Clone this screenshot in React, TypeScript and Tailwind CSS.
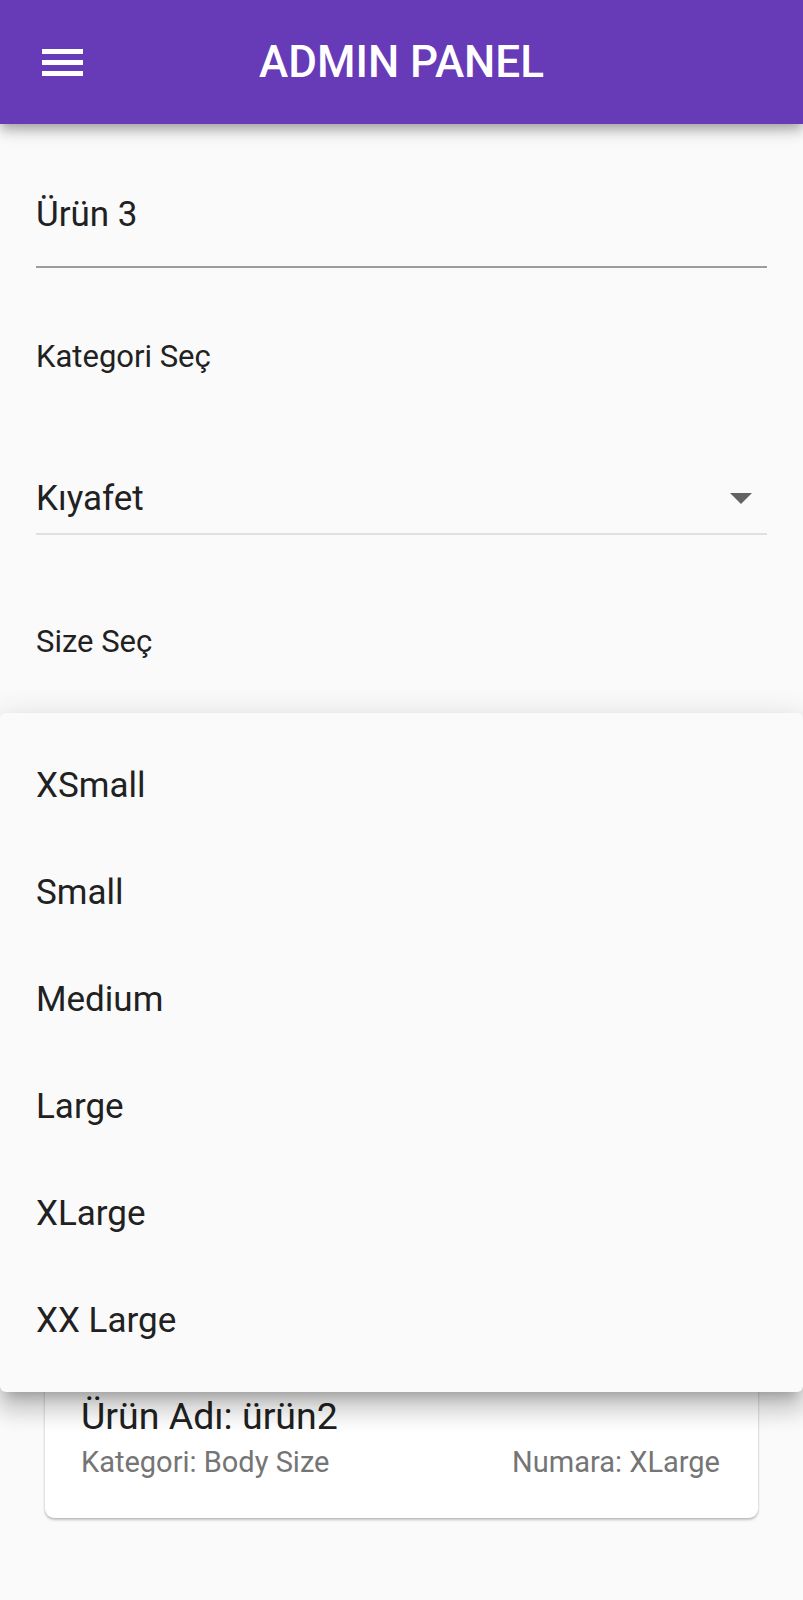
import React from 'react';

const sizes = ['XSmall', 'Small', 'Medium', 'Large', 'XLarge', 'XX Large'];

const MenuIcon = () => (
  <svg width="41" height="27" viewBox="0 0 41 27" fill="#ffffff">
    <rect x="0" y="0" width="41" height="5" />
    <rect x="0" y="11" width="41" height="5" />
    <rect x="0" y="22" width="41" height="5" />
  </svg>
);

const DropArrow = () => (
  <svg width="22" height="11" viewBox="0 0 22 11" className="mr-[15px]">
    <polygon points="0,0 22,0 11,11" fill="#636363" />
  </svg>
);

export default function App() {
  return (
    <div className="relative h-[1600px] overflow-hidden bg-[#fafafa] font-['Roboto','Liberation_Sans',sans-serif]">
      {/* App bar */}
      <header className="relative z-10 grid h-[124px] grid-cols-[1fr_auto_1fr] items-center bg-[#673ab7] shadow-[0_4px_9px_-2px_rgba(0,0,0,0.2),0_9px_11px_0_rgba(0,0,0,0.14),0_2px_22px_0_rgba(0,0,0,0.12)]">
        <div className="pl-[42px] flex items-center">
          <MenuIcon />
        </div>
        <h1 className="text-[44px] font-medium leading-none text-white">ADMIN PANEL</h1>
        <div />
      </header>

      <main className="px-[36px]">
        {/* product name field */}
        <div className="pt-[70px] pb-[31px] border-b-2 border-[#9c9c9c]">
          <div className="text-[35px] leading-[41px] text-[#212121]">Ürün 3</div>
        </div>

        <div className="mt-[71px] text-[31px] leading-[36px] text-[#212121]">Kategori Seç</div>

        {/* category dropdown */}
        <div className="mt-[103px] flex h-[41px] items-center justify-between">
          <span className="text-[35px] leading-[41px] text-[#212121]">Kıyafet</span>
          <DropArrow />
        </div>
        <div className="mt-[14px] border-b-2 border-[#e0e0e0]" />

        <div className="mt-[89px] text-[31px] leading-[36px] text-[#212121]">Size Seç</div>

        {/* size dropdown area, covered by the open menu */}
        <div className="h-[715px] pt-[155px]">
          <div className="border-b-2 border-[#e0e0e0]" />
        </div>

        {/* product card */}
        <div className="mx-[9px] rounded-[9px] bg-white pt-[20px] pb-[38px] pl-[36px] pr-[38px] shadow-[0_2px_3px_rgba(0,0,0,0.2),0_1px_2px_rgba(0,0,0,0.1)]">
          <div className="text-[37.5px] leading-[42px] text-[#212121]">Ürün Adı: ürün2</div>
          <div className="mt-[8px] flex justify-between text-[29px] leading-[35px] text-[#757575]">
            <span>Kategori: Body Size</span>
            <span>Numara: XLarge</span>
          </div>
        </div>
      </main>

      {/* open dropdown menu */}
      <div className="absolute left-0 right-0 top-[713px] z-20 h-[679px] rounded-[6px] bg-[#fafafa] pt-[19px] shadow-[0_11px_11px_-7px_rgba(0,0,0,0.2),0_18px_22px_2px_rgba(0,0,0,0.14),0_7px_31px_4px_rgba(0,0,0,0.12)]">
        {sizes.map((s) => (
          <div key={s} className="flex h-[107px] items-center px-[36px] text-[35px] leading-[41px] text-[#212121]">
            {s}
          </div>
        ))}
      </div>
    </div>
  );
}
